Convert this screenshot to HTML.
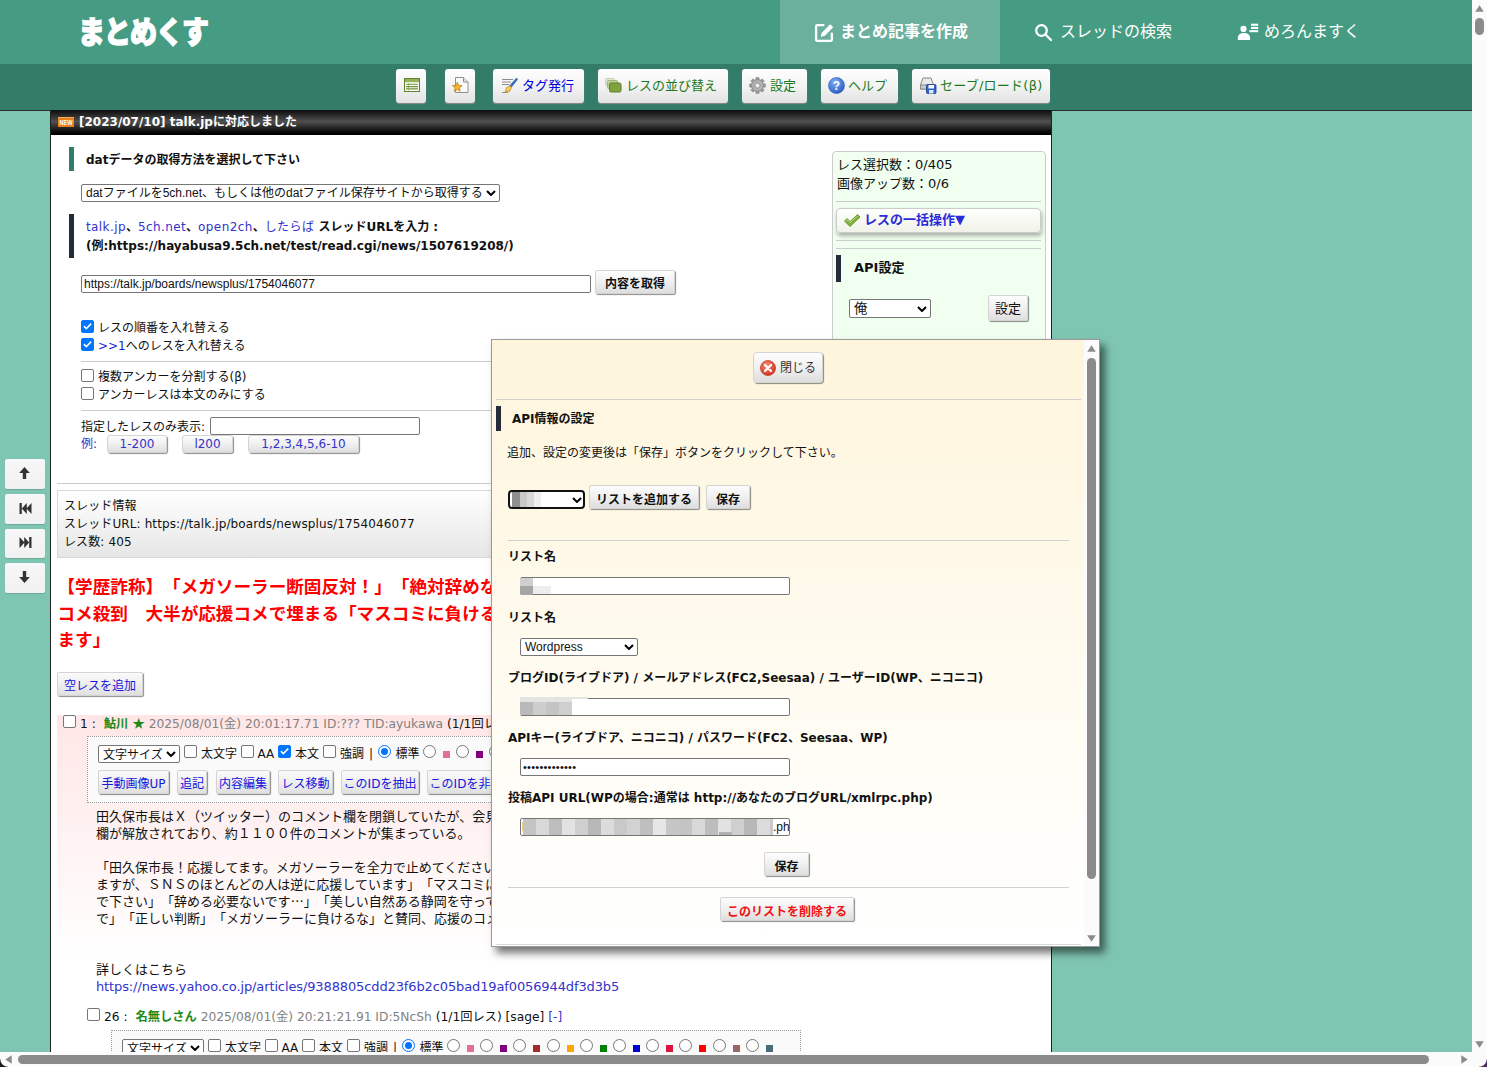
<!DOCTYPE html>
<html lang="ja">
<head>
<meta charset="utf-8">
<title>まとめくす</title>
<style>
*{box-sizing:border-box;margin:0;padding:0}
html,body{width:1487px;height:1067px;overflow:hidden}
body{position:relative;background:#7fc6b2;font-family:"DejaVu Sans","Noto Sans CJK JP",sans-serif;font-size:12px;color:#111;line-height:18px;text-spacing-trim:space-all}
.abs{position:absolute}
.t{position:absolute;white-space:nowrap}
.ar{font-family:"Liberation Sans","Noto Sans CJK JP",sans-serif}
a,.lk{color:#3333cc;text-decoration:none}
#hdr{position:absolute;left:0;top:0;width:1472px;height:64px;background:#469c83}
#tb{position:absolute;left:0;top:64px;width:1472px;height:47px;background:#337c68;border-bottom:1px solid #2a2a2a}
#main{position:absolute;left:50px;top:110px;width:1002px;height:942px;background:#fff;border-left:1px solid #222;border-right:1px solid #222;overflow:hidden}
#news{position:absolute;left:51px;top:110px;width:1000px;height:25px;background:linear-gradient(#0c0c0c 0%,#505050 47%,#2a2a2a 68%,#000 93%,#000 100%);color:#fff;font-weight:bold;font-size:12px}
.tab{position:absolute;top:0;height:64px;color:#fff;font-size:16px;line-height:64px;white-space:nowrap}
.tbtn{position:absolute;top:69px;height:34px;border-radius:3px;background:linear-gradient(#fff,#f3f3f3 50%,#e2e2e2);box-shadow:0 1px 1px #8d8d8d;font-size:13px;line-height:34px;white-space:nowrap}
.cb{position:absolute;width:13px;height:13px;border:1px solid #767676;border-radius:2px;background:#fff}
.cb.on{background:#0075ff;border-color:#0075ff}
.cb.on::after{content:"";position:absolute;left:-1px;top:-1px;width:13px;height:13px;background:#fff;clip-path:polygon(2.300px 6.800px,3.500px 5.600px,5.300px 7.400px,9.600px 3.100px,10.800px 4.300px,5.300px 9.800px)}
.rd{position:absolute;width:13px;height:13px;border:1px solid #767676;border-radius:50%;background:#fff}
.rd.on{border-color:#0075ff}
.rd.on::after{content:"";position:absolute;left:2px;top:2px;width:7px;height:7px;border-radius:50%;background:#0075ff}
.sq{position:absolute;width:7px;height:7px}
.hr{position:absolute;height:1px;background:#ccc}
.inp{position:absolute;border:1px solid #767676;border-radius:2px;background:#fff;font-family:"Liberation Sans","Noto Sans CJK JP",sans-serif;font-size:12px;white-space:nowrap;overflow:hidden}
.sel{position:absolute;border:1px solid #767676;border-radius:2px;background:#fff;font-family:"Liberation Sans","Noto Sans CJK JP",sans-serif;font-size:12px;white-space:nowrap;overflow:hidden}
.sel svg{position:absolute;right:3px;top:50%;margin-top:-3px}
.gb{position:absolute;border-radius:2px;background:linear-gradient(#fdfdfd,#f0f0f0 50%,#dedede);box-shadow:1px 1px 1px rgba(0,0,0,.45);border:1px solid #d4d4d4;white-space:nowrap;text-align:center}
.pb{color:#1414dc;border-radius:2px;background:linear-gradient(#fbfbfb,#efefef 50%,#e0e0e0)}
.sb{position:absolute;left:5px;width:40px;height:29.500px;border-radius:2px;background:linear-gradient(#f7f7f7,#f1f1f1);box-shadow:0 1px 1px rgba(0,0,0,.15)}
</style>
</head>
<body>
<!-- HEADER -->
<div id="hdr">
<div class="t" id="logo" style="left:78px;top:11px;font-family:'Noto Sans CJK JP',sans-serif;font-weight:900;font-size:27px;line-height:40px;color:#fff;letter-spacing:-1px;-webkit-text-stroke:1.2px #fff;transform:scaleY(1.12);transform-origin:0 50%">まとめくす</div>
<div class="abs" style="left:780px;top:0;width:220px;height:64px;background:#6bb09d"></div>
<svg class="abs" style="left:814px;top:22px" width="21" height="21" viewBox="0 0 20 20" fill="none" stroke="#fff" stroke-width="2.2" stroke-linejoin="round" stroke-linecap="round"><path d="M9 3H3.2A1.2 1.2 0 0 0 2 4.200V16.800A1.200 1.200 0 0 0 3.200 18H15.800A1.200 1.200 0 0 0 17 16.800V11"/><path d="M7 13.500L7.800 10.500L15.500 2.800L17.700 5L10 12.700Z" fill="#fff" stroke-width="1"/></svg>
<div class="tab" style="left:840px;font-weight:bold">まとめ記事を作成</div>
<svg class="abs" style="left:1034px;top:23px" width="20" height="20" viewBox="0 0 20 20" fill="none" stroke="#fff" stroke-width="2.300" stroke-linecap="round"><circle cx="7.500" cy="7.500" r="5.300"/><path d="M11.500 11.500L17 17"/></svg>
<div class="tab" style="left:1060px">スレッドの検索</div>
<svg class="abs" style="left:1237px;top:23px" width="22" height="18" viewBox="0 0 22 18" fill="#fff"><circle cx="6.500" cy="5.900" r="3.100"/><path d="M0.800 16.900V15C0.800 11.800 3.400 9.900 6.900 9.900S13.100 11.800 13.100 15V16.900Z"/><rect x="14" y="0.700" width="7.200" height="2.100"/><rect x="14" y="3.900" width="7.200" height="2.100"/><rect x="12.400" y="7.100" width="8.800" height="2.100"/></svg>
<div class="tab" style="left:1264px">めろんますく</div>
</div>
<div id="tb"></div>
<div class="tbtn" style="left:396px;width:30px"></div>
<svg class="abs" style="left:404px;top:78px" width="16" height="14" viewBox="0 0 16 14"><rect x="0.500" y="0.500" width="15" height="13" fill="#fdfff8" stroke="#5f7f2a"/><rect x="1" y="1" width="14" height="3.200" fill="#93b35a"/><path d="M2 6.300H14M2 8.600H14M2 10.900H14" stroke="#6f8f3a" stroke-width="1.100"/><path d="M4.500 5V12.500" stroke="#8aa85a" stroke-width="0.700"/></svg>
<div class="tbtn" style="left:445px;width:30px"></div>
<svg class="abs" style="left:452px;top:77px" width="17" height="17" viewBox="0 0 17 17"><path d="M3.500 0.500H11.500L16 5V15.500H3.500Z" fill="#fafafa" stroke="#8f8f8f"/><path d="M11.500 0.500V5H16" fill="#e2e2e2" stroke="#8f8f8f"/><path d="M5.300 5.200L6.593 8.420L10.055 8.655L7.392 10.880L8.239 14.245L5.300 12.400L2.361 14.245L3.208 10.880L0.545 8.655L4.007 8.420Z" fill="#f7b62e" stroke="#c4820f" stroke-width="0.800" stroke-linejoin="round"/></svg>
<div class="tbtn" style="left:493px;width:91px"></div>
<svg class="abs" style="left:501px;top:77px" width="17" height="17" viewBox="0 0 17 17"><path d="M1 2.500H12M1 5H10M1 7.500H8M1 15.500H7" stroke="#8c8c8c" stroke-width="1"/><path d="M15.500 1L16.500 2.500L10.500 10L8.500 9Z" fill="#3d72c4" stroke="#264f96" stroke-width="0.600"/><path d="M8.500 9L10.500 10L9 14L4 15.500L5.500 10.500Z" fill="#f5c95a" stroke="#b8862a" stroke-width="0.700"/></svg>
<div class="t" style="left:522px;top:69px;line-height:34px;font-size:13px;color:#0000dd">タグ発行</div>
<div class="tbtn" style="left:598px;width:130px"></div>
<svg class="abs" style="left:605px;top:78px" width="17" height="15" viewBox="0 0 17 15"><rect x="0.500" y="0.500" width="9" height="7" rx="1" fill="#dfe9cf" stroke="#c3d2ab"/><rect x="2.500" y="2.500" width="10" height="8" rx="1" fill="#bcd199" stroke="#9db777"/><rect x="4.500" y="5" width="11.500" height="9" rx="1.500" fill="#7fa23f" stroke="#5f7f2a"/></svg>
<div class="t" style="left:626px;top:69px;line-height:34px;font-size:13px;color:#1a7a1a">レスの並び替え</div>
<div class="tbtn" style="left:742px;width:65px"></div>
<svg class="abs" style="left:749px;top:77px" width="17" height="17" viewBox="0 0 17 17"><g transform="translate(8.500 8.500)"><g fill="#9c9c9c" stroke="#777" stroke-width="0.500"><rect x="-1.700" y="-8" width="3.400" height="16" rx="0.800"/><rect x="-1.700" y="-8" width="3.400" height="16" rx="0.800" transform="rotate(45)"/><rect x="-1.700" y="-8" width="3.400" height="16" rx="0.800" transform="rotate(90)"/><rect x="-1.700" y="-8" width="3.400" height="16" rx="0.800" transform="rotate(135)"/></g><circle r="5.800" fill="#b4b4b4" stroke="#7d7d7d" stroke-width="0.600"/><circle r="2.600" fill="#f1f1f1" stroke="#7d7d7d" stroke-width="0.800"/></g></svg>
<div class="t" style="left:770px;top:69px;line-height:34px;font-size:13px;color:#1a7a1a">設定</div>
<div class="tbtn" style="left:821px;width:77px"></div>
<svg class="abs" style="left:828px;top:77px" width="17" height="17" viewBox="0 0 17 17"><defs><radialGradient id="hg" cx="0.400" cy="0.300" r="0.800"><stop offset="0" stop-color="#7fb0f5"/><stop offset="1" stop-color="#1f55c0"/></radialGradient></defs><circle cx="8.500" cy="8.500" r="8" fill="url(#hg)" stroke="#2a55a8" stroke-width="0.600"/><text x="8.500" y="13" text-anchor="middle" font-family="Liberation Sans,sans-serif" font-weight="bold" font-size="12" fill="#fff">?</text></svg>
<div class="t" style="left:848px;top:69px;line-height:34px;font-size:13px;color:#1a7a1a">ヘルプ</div>
<div class="tbtn" style="left:912px;width:138px"></div>
<svg class="abs" style="left:920px;top:77px" width="17" height="17" viewBox="0 0 17 17"><path d="M3 1H11L13.500 8V12H0.500V8Z" fill="#e9e9e9" stroke="#8a8a8a"/><rect x="0.500" y="8" width="13" height="4" fill="#c9c9c9" stroke="#8a8a8a"/><rect x="6.500" y="7.500" width="9.500" height="9" rx="1" fill="#2b62c9" stroke="#1c3f8a" stroke-width="0.800"/><rect x="8.500" y="8" width="5.500" height="3.500" fill="#fff"/><rect x="9" y="13" width="4.500" height="3.500" fill="#dfe6f5"/></svg>
<div class="t" style="left:940px;top:69px;line-height:34px;font-size:13px;color:#1a7a1a;letter-spacing:0.250px">セーブ/ロード(β)</div>
<div id="main"></div>
<div id="news"></div>
<svg class="abs" style="left:58px;top:117px" width="16" height="10" viewBox="0 0 16 10"><rect width="16" height="10" fill="#e8801f"/><rect y="0" width="16" height="1" fill="#f5a85a"/><text x="8" y="8" text-anchor="middle" font-family="Liberation Sans,sans-serif" font-weight="bold" font-size="7" fill="#fff" textLength="13" lengthAdjust="spacingAndGlyphs">NEW</text></svg>
<div class="t" style="left:79px;top:112px;line-height:20px;color:#fff;font-weight:bold;font-size:12px">[2023/07/10] talk.jpに対応しました</div>
<!-- LEFT PANEL -->
<div class="abs" style="left:69px;top:147px;width:5px;height:24px;background:#2f7d6b"></div>
<div class="t" style="left:86px;top:151px;font-weight:bold">datデータの取得方法を選択して下さい</div>
<div class="sel" style="left:81px;top:184px;width:419px;height:18px;line-height:16px;padding-left:4px">datファイルを5ch.net、もしくは他のdatファイル保存サイトから取得する<svg width="10" height="6" viewBox="0 0 10 6"><path d="M1 1L5 5L9 1" fill="none" stroke="#000" stroke-width="2"/></svg></div>
<div class="abs" style="left:69px;top:214px;width:5px;height:44px;background:#252b3a"></div>
<div class="t" style="left:86px;top:218px;line-height:18.500px;font-weight:bold"><span class="lk" style="font-weight:normal;letter-spacing:0.400px">talk.jp</span>、<span class="lk" style="font-weight:normal;letter-spacing:0.400px">5ch.net</span>、<span class="lk" style="font-weight:normal;letter-spacing:0.400px">open2ch</span>、<span class="lk" style="font-weight:normal;letter-spacing:0.400px">したらば</span> スレッドURLを入力 :<br>(例:https://hayabusa9.5ch.net/test/read.cgi/news/1507619208/)</div>
<div class="inp" style="left:81px;top:275px;width:510px;height:18px;line-height:16px;padding-left:2px">https://talk.jp/boards/newsplus/1754046077</div>
<div class="gb" style="left:595px;top:270px;width:80px;height:24px;line-height:26px;font-weight:bold">内容を取得</div>
<div class="cb on" style="left:81px;top:320px"></div><div class="t" style="left:98px;top:319px">レスの順番を入れ替える</div>
<div class="cb on" style="left:81px;top:338px"></div><div class="t" style="left:98px;top:337px"><span style="color:#2222dd">&gt;&gt;1</span>へのレスを入れ替える</div>
<div class="hr" style="left:81px;top:361px;width:740px"></div>
<div class="cb" style="left:81px;top:369px"></div><div class="t" style="left:98px;top:368px">複数アンカーを分割する(β)</div>
<div class="cb" style="left:81px;top:387px"></div><div class="t" style="left:98px;top:386px">アンカーレスは本文のみにする</div>
<div class="hr" style="left:81px;top:410px;width:740px"></div>
<div class="t" style="left:81px;top:418px">指定したレスのみ表示:</div>
<div class="inp" style="left:210px;top:417px;width:210px;height:18px"></div>
<div class="t lk" style="left:81px;top:435px">例:</div>
<div class="gb lk" style="left:107px;top:434.500px;width:60px;height:18.500px;line-height:17px;border-radius:3px">1-200</div>
<div class="gb lk" style="left:182px;top:434.500px;width:51px;height:18.500px;line-height:17px;border-radius:3px">l200</div>
<div class="gb lk" style="left:248px;top:434.500px;width:111px;height:18.500px;line-height:17px;border-radius:3px">1,2,3,4,5,6-10</div>
<div class="hr" style="left:57px;top:483px;width:988px"></div>
<div class="abs" style="left:57px;top:490px;width:988px;height:68px;border:1px solid #d8d8d8;background:linear-gradient(#fff,#e6e6e6)"></div>
<div class="t" style="left:64px;top:497px;font-size:12px;letter-spacing:0.110px">スレッド情報<br>スレッドURL: https://talk.jp/boards/newsplus/1754046077<br>レス数: 405</div>
<div class="t" style="left:57.500px;top:574.400px;font-size:17.600px;line-height:26.400px;font-weight:bold;color:#f00">【学歴詐称】「メガソーラー断固反対！」「絶対辞めないで」田久保市長のＸコメント欄解放で応援<br>コメ殺到　大半が応援コメで埋まる「マスコミに負けるな」「辞める必要ない」「応援して<br>ます」</div>
<div class="gb pb" style="left:57px;top:672px;width:86px;height:24px;line-height:26px">空レスを追加</div>
<!-- RIGHT PANEL -->
<div class="abs" style="left:831.500px;top:151px;width:214.500px;height:400px;background:#f0fff0;border:1px solid #ccc;border-radius:4px"></div>
<div class="t" style="left:837px;top:155px;font-size:13px;line-height:19px">レス選択数：0/405<br>画像アップ数：0/6</div>
<div class="hr" style="left:836px;top:201px;width:205px"></div>
<div class="abs" style="left:836px;top:208px;width:205px;height:25px;border:1px solid #ccc;border-radius:4px;background:linear-gradient(#fdfffb,#f1f3ea);box-shadow:1px 3px 4px rgba(0,0,0,.3)"></div>
<svg class="abs" style="left:843px;top:213px" width="18" height="15" viewBox="0 0 18 15"><path d="M1.500 8L4 5.500L7 8.500L14.500 1.500L17 4L7 13.500Z" fill="#7fb23a" stroke="#5c8a22" stroke-width="0.800" stroke-linejoin="round"/><path d="M2.600 8L4 6.600L7 9.600L14.500 2.800" fill="none" stroke="#b7db7d" stroke-width="0.900"/></svg>
<div class="t" style="left:864px;top:211px;font-size:13px;font-weight:bold;color:#2b2bd9">レスの一括操作▼</div>
<div class="hr" style="left:836px;top:240px;width:205px"></div>
<div class="hr" style="left:836px;top:248px;width:205px"></div>
<div class="abs" style="left:836px;top:255px;width:5px;height:27px;background:#252b3a"></div>
<div class="t" style="left:854px;top:259px;font-size:13px;font-weight:bold">API設定</div>
<div class="sel" style="left:849px;top:299px;width:82px;height:19px;line-height:17px;padding-left:4px;font-size:13.300px">俺<svg width="10" height="6" viewBox="0 0 10 6"><path d="M1 1L5 5L9 1" fill="none" stroke="#000" stroke-width="2"/></svg></div>
<div class="gb" style="left:988px;top:295px;width:40px;height:26px;line-height:25px;font-size:13px">設定</div>
<!-- POSTS -->
<div class="abs" style="left:57px;top:715px;width:988px;height:290px;background:linear-gradient(#ffe6e6,#fff 85%)"></div>
<div class="cb" style="left:63px;top:715px"></div>
<div class="t" style="left:80px;top:715px;font-size:12.250px">1 : <b style="color:#1a8a1a;margin-left:4px">鮎川 <span style="font-family:'Noto Sans CJK JP',sans-serif;line-height:0">★</span></b> <span style="color:#828282">2025/08/01(金) 20:01:17.71 ID:??? TID:ayukawa</span> (1/1回レス) <span class="lk">[-]</span></div>
<div class="abs" style="left:87px;top:736px;width:714px;height:67px;border:1px dotted #999;background:#fafafa"></div>
<div class="sel" style="left:98px;top:745px;width:82px;height:18px;line-height:19px;padding-left:4px;font-size:12px">文字サイズ<svg width="10" height="6" viewBox="0 0 10 6"><path d="M1 1L5 5L9 1" fill="none" stroke="#000" stroke-width="2"/></svg></div>
<div class="cb" style="left:184px;top:745px"></div><div class="t" style="left:201px;top:745px">太文字</div>
<div class="cb" style="left:241px;top:745px"></div><div class="t" style="left:257.5px;top:745px">AA</div>
<div class="cb on" style="left:278px;top:745px"></div><div class="t" style="left:295px;top:745px">本文</div>
<div class="cb" style="left:323px;top:745px"></div><div class="t" style="left:340px;top:745px">強調</div>
<div class="t" style="left:369px;top:745px">|</div>
<div class="rd on" style="left:378px;top:745px"></div><div class="t" style="left:395.5px;top:745px">標準</div>
<div class="rd" style="left:423.0px;top:745px"></div><div class="sq" style="left:443.0px;top:750.5px;background:#e07095"></div>
<div class="rd" style="left:456.2px;top:745px"></div><div class="sq" style="left:476.2px;top:750.5px;background:#800080"></div>
<div class="rd" style="left:489.4px;top:745px"></div><div class="sq" style="left:509.4px;top:750.5px;background:#a52a2a"></div>
<div class="rd" style="left:522.6px;top:745px"></div><div class="sq" style="left:542.6px;top:750.5px;background:#ffa500"></div>
<div class="rd" style="left:555.8px;top:745px"></div><div class="sq" style="left:575.8px;top:750.5px;background:#008000"></div>
<div class="rd" style="left:589.0px;top:745px"></div><div class="sq" style="left:609.0px;top:750.5px;background:#0000cd"></div>
<div class="rd" style="left:622.2px;top:745px"></div><div class="sq" style="left:642.2px;top:750.5px;background:#dc143c"></div>
<div class="rd" style="left:655.4px;top:745px"></div><div class="sq" style="left:675.4px;top:750.5px;background:#ff0000"></div>
<div class="rd" style="left:688.6px;top:745px"></div><div class="sq" style="left:708.6px;top:750.5px;background:#996666"></div>
<div class="rd" style="left:721.8px;top:745px"></div><div class="sq" style="left:741.8px;top:750.5px;background:#4a6a7a"></div>
<div class="gb pb" style="left:98px;top:770px;width:71px;height:24px;line-height:27.500px">手動画像UP</div>
<div class="gb pb" style="left:177px;top:770px;width:30px;height:24px;line-height:27.500px">追記</div>
<div class="gb pb" style="left:216px;top:770px;width:54px;height:24px;line-height:27.500px">内容編集</div>
<div class="gb pb" style="left:278px;top:770px;width:55px;height:24px;line-height:27.500px">レス移動</div>
<div class="gb pb" style="left:341px;top:770px;width:78px;height:24px;line-height:27.500px">このIDを抽出</div>
<div class="gb pb" style="left:427px;top:770px;width:90px;height:24px;line-height:27.500px">このIDを非表示</div>
<div class="t" style="left:96px;top:808px;font-size:13px;line-height:17px">田久保市長はＸ（ツイッター）のコメント欄を閉鎖していたが、会見後に解放。最新の投稿のコメント<br>欄が解放されており、約１１００件のコメントが集まっている。<br><br>「田久保市長！応援してます。メガソーラーを全力で止めてください」「テレビでは批判されてい<br>ますが、ＳＮＳのほとんどの人は逆に応援しています」「マスコミに負けないで」「絶対辞めない<br>で下さい」「辞める必要ないです<span style="font-family:'Noto Sans CJK JP',sans-serif;line-height:0">…</span>」「美しい自然ある静岡を守ってください」「負けない<br>で」「正しい判断」「メガソーラーに負けるな」と賛同、応援のコメントが大半を占めている。<br><br><br>詳しくはこちら<br><span class="lk" style="letter-spacing:-0.120px">https://news.yahoo.co.jp/articles/9388805cdd23f6b2c05bad19af0056944df3d3b5</span></div>
<div class="cb" style="left:87px;top:1008px"></div>
<div class="t" style="left:104px;top:1008px;font-size:12.250px">26 : <b style="color:#1a8a1a;margin-left:4px">名無しさん</b> <span style="color:#828282">2025/08/01(金) 20:21:21.91 ID:5NcSh</span> (1/1回レス) [sage] <span class="lk">[-]</span></div>
<div class="abs" style="left:111px;top:1030px;width:690px;height:67px;border:1px dotted #999;background:#fafafa"></div>
<div class="sel" style="left:122px;top:1039px;width:82px;height:18px;line-height:19px;padding-left:4px;font-size:12px">文字サイズ<svg width="10" height="6" viewBox="0 0 10 6"><path d="M1 1L5 5L9 1" fill="none" stroke="#000" stroke-width="2"/></svg></div>
<div class="cb" style="left:208px;top:1039px"></div><div class="t" style="left:225px;top:1039px">太文字</div>
<div class="cb" style="left:265px;top:1039px"></div><div class="t" style="left:281.5px;top:1039px">AA</div>
<div class="cb" style="left:302px;top:1039px"></div><div class="t" style="left:319px;top:1039px">本文</div>
<div class="cb" style="left:347px;top:1039px"></div><div class="t" style="left:364px;top:1039px">強調</div>
<div class="t" style="left:393px;top:1039px">|</div>
<div class="rd on" style="left:402px;top:1039px"></div><div class="t" style="left:419.5px;top:1039px">標準</div>
<div class="rd" style="left:447.0px;top:1039px"></div><div class="sq" style="left:467.0px;top:1044.5px;background:#e07095"></div>
<div class="rd" style="left:480.2px;top:1039px"></div><div class="sq" style="left:500.2px;top:1044.5px;background:#800080"></div>
<div class="rd" style="left:513.4px;top:1039px"></div><div class="sq" style="left:533.4px;top:1044.5px;background:#a52a2a"></div>
<div class="rd" style="left:546.6px;top:1039px"></div><div class="sq" style="left:566.6px;top:1044.5px;background:#ffa500"></div>
<div class="rd" style="left:579.8px;top:1039px"></div><div class="sq" style="left:599.8px;top:1044.5px;background:#008000"></div>
<div class="rd" style="left:613.0px;top:1039px"></div><div class="sq" style="left:633.0px;top:1044.5px;background:#0000cd"></div>
<div class="rd" style="left:646.2px;top:1039px"></div><div class="sq" style="left:666.2px;top:1044.5px;background:#dc143c"></div>
<div class="rd" style="left:679.4px;top:1039px"></div><div class="sq" style="left:699.4px;top:1044.5px;background:#ff0000"></div>
<div class="rd" style="left:712.6px;top:1039px"></div><div class="sq" style="left:732.6px;top:1044.5px;background:#996666"></div>
<div class="rd" style="left:745.8px;top:1039px"></div><div class="sq" style="left:765.8px;top:1044.5px;background:#4a6a7a"></div>
<!-- side buttons -->
<div class="sb" style="top:459px"></div>
<svg class="abs" style="left:19px;top:467px" width="11" height="12" viewBox="0 0 11 12"><path d="M5.500 0L10.800 6H7.200V12H3.800V6H0.200Z" fill="#333"/></svg>
<div class="sb" style="top:494px"></div>
<svg class="abs" style="left:18.500px;top:503px" width="13" height="11" viewBox="0 0 13 11"><path d="M0.500 0H2.800V11H0.500ZM2.800 5.500L7.800 0V11ZM7.500 5.500L12.500 0V11Z" fill="#333"/></svg>
<div class="sb" style="top:528.500px"></div>
<svg class="abs" style="left:18.500px;top:537px" width="13" height="11" viewBox="0 0 13 11"><path d="M12.500 0H10.200V11H12.500ZM10.200 5.500L5.200 0V11ZM5.500 5.500L0.500 0V11Z" fill="#333"/></svg>
<div class="sb" style="top:563px"></div>
<svg class="abs" style="left:19px;top:571px" width="11" height="12" viewBox="0 0 11 12"><path d="M5.500 12L10.800 6H7.200V0H3.800V6H0.200Z" fill="#333"/></svg>

<!-- MODAL -->
<div class="abs" style="left:491px;top:339px;width:609px;height:608px;border:1px solid #9a9a9a;background:linear-gradient(#fef5dc,#fef8e6 30%,#fffbf0 55%,#fffefa 82%,#fff);box-shadow:5px 6px 8px rgba(0,0,0,.55)"></div>
<div class="abs" style="left:1084px;top:340px;width:15px;height:606px;background:#fbfbfb"></div>
<svg class="abs" style="left:1087px;top:345px" width="9" height="7" viewBox="0 0 9 7"><path d="M4.500 0.300L8.800 6.700H0.200Z" fill="#8b8b8b"/></svg>
<div class="abs" style="left:1087px;top:358px;width:9px;height:521px;border-radius:4.500px;background:#8b8b8b"></div>
<svg class="abs" style="left:1087px;top:935px" width="9" height="7" viewBox="0 0 9 7"><path d="M4.500 6.700L8.800 0.300H0.200Z" fill="#8b8b8b"/></svg>
<div class="gb" style="left:753px;top:352px;width:70px;height:31px;border-radius:4px"></div>
<svg class="abs" style="left:759.500px;top:359.500px" width="16" height="16" viewBox="0 0 17 17"><defs><radialGradient id="cg" cx="0.400" cy="0.300" r="0.800"><stop offset="0" stop-color="#f58a72"/><stop offset="1" stop-color="#d2281c"/></radialGradient></defs><circle cx="8.500" cy="8.500" r="8" fill="url(#cg)" stroke="#b5281c" stroke-width="0.700"/><path d="M5.300 5.300L11.700 11.700M11.700 5.300L5.300 11.700" stroke="#fff" stroke-width="2.400" stroke-linecap="round"/></svg>
<div class="t" style="left:780px;top:359px;color:#333">閉じる</div>
<div class="hr" style="left:496px;top:399px;width:585px;background:#d0d0d0"></div>
<div class="abs" style="left:496px;top:406px;width:5px;height:25px;background:#252b3a"></div>
<div class="t" style="left:512px;top:410px;font-weight:bold">API情報の設定</div>
<div class="t" style="left:507px;top:444px">追加、設定の変更後は「保存」ボタンをクリックして下さい。</div>
<div class="abs" style="left:508px;top:490px;width:77px;height:19px;border:2px solid #111;border-radius:4px;background:#fff"></div>
<div class="abs" style="left:512px;top:492px;width:29px;height:15px;overflow:hidden"><i class="abs" style="left:0px;top:0px;width:8px;height:15px;background:#8f8f8f"></i><i class="abs" style="left:8px;top:0px;width:7px;height:15px;background:#c9c9c9"></i><i class="abs" style="left:15px;top:0px;width:7px;height:15px;background:#d9d9d9"></i><i class="abs" style="left:22px;top:0px;width:7px;height:15px;background:#efefef"></i></div>
<svg class="abs" style="left:571.500px;top:496.500px" width="10" height="6" viewBox="0 0 10 6"><path d="M1 1L5 5L9 1" fill="none" stroke="#000" stroke-width="2"/></svg>
<div class="gb" style="left:589px;top:485px;width:110px;height:24px;line-height:28.500px;font-weight:bold">リストを追加する</div>
<div class="gb" style="left:706px;top:485px;width:44px;height:24px;line-height:28.500px;font-weight:bold">保存</div>
<div class="hr" style="left:508px;top:540px;width:561px;background:#d0d0d0"></div>
<div class="t" style="left:508px;top:548px;font-weight:bold">リスト名</div>
<div class="inp" style="left:520px;top:577px;width:270px;height:18px"></div>
<div class="abs" style="left:520px;top:577px;width:31px;height:18px;overflow:hidden;border-radius:2px 0 0 2px"><i class="abs" style="left:0;top:1px;width:13px;height:8px;background:#cfcfcf"></i><i class="abs" style="left:0;top:9px;width:13px;height:9px;background:#a6a6a6"></i><i class="abs" style="left:13px;top:9px;width:18px;height:8px;background:#ededed"></i></div>
<div class="t" style="left:508px;top:609px;font-weight:bold">リスト名</div>
<div class="sel" style="left:520px;top:638px;width:118px;height:18px;line-height:16px;padding-left:4px">Wordpress<svg width="10" height="6" viewBox="0 0 10 6"><path d="M1 1L5 5L9 1" fill="none" stroke="#000" stroke-width="2"/></svg></div>
<div class="t" style="left:508px;top:669px;font-weight:bold">ブログID(ライブドア) / メールアドレス(FC2,Seesaa) / ユーザーID(WP、ニコニコ)</div>
<div class="inp" style="left:520px;top:698px;width:270px;height:18px"></div>
<div class="abs" style="left:520px;top:697px;width:68px;height:18px;overflow:hidden"><i class="abs" style="left:0px;top:0px;width:68px;height:5px;background:#e4e4e4"></i><i class="abs" style="left:0px;top:5px;width:13px;height:13px;background:#b9b9b9"></i><i class="abs" style="left:13px;top:5px;width:13px;height:13px;background:#cdcdcd"></i><i class="abs" style="left:26px;top:5px;width:13px;height:13px;background:#c4c4c4"></i><i class="abs" style="left:39px;top:5px;width:13px;height:13px;background:#cfcfcf"></i><i class="abs" style="left:52px;top:5px;width:16px;height:13px;background:#fff"></i><i class="abs" style="left:52px;top:0px;width:16px;height:2px;background:#e4e4e4"></i><i class="abs" style="left:52px;top:2px;width:16px;height:16px;background:#fff"></i></div>
<div class="t" style="left:508px;top:729px;font-weight:bold">APIキー(ライブドア、ニコニコ) / パスワード(FC2、Seesaa、WP)</div>
<div class="inp" style="left:520px;top:758px;width:270px;height:18px;line-height:16px;padding-left:2px;font-size:11px;letter-spacing:0.250px">•••••••••••••</div>
<div class="t" style="left:508px;top:789px;font-weight:bold">投稿API URL(WPの場合:通常は http://あなたのブログURL/xmlrpc.php)</div>
<div class="inp" style="left:520px;top:818px;width:270px;height:18px;line-height:16px"><span style="position:absolute;left:1px">h</span><span style="position:absolute;left:252px">.ph</span></div>
<div class="abs" style="left:523px;top:819px;width:250px;height:16px;overflow:hidden"><i class="abs" style="left:0px;top:0px;width:13px;height:16px;background:#c4c4c4"></i><i class="abs" style="left:13px;top:0px;width:13px;height:16px;background:#d8d8d8"></i><i class="abs" style="left:26px;top:0px;width:13px;height:16px;background:#bdbdbd"></i><i class="abs" style="left:39px;top:0px;width:13px;height:16px;background:#e2e2e2"></i><i class="abs" style="left:52px;top:0px;width:13px;height:16px;background:#cfcfcf"></i><i class="abs" style="left:65px;top:0px;width:13px;height:16px;background:#b8b8b8"></i><i class="abs" style="left:78px;top:0px;width:13px;height:16px;background:#dcdcdc"></i><i class="abs" style="left:91px;top:0px;width:13px;height:16px;background:#c9c9c9"></i><i class="abs" style="left:104px;top:0px;width:13px;height:16px;background:#d2d2d2"></i><i class="abs" style="left:117px;top:0px;width:13px;height:16px;background:#bfbfbf"></i><i class="abs" style="left:130px;top:0px;width:13px;height:16px;background:#e6e6e6"></i><i class="abs" style="left:143px;top:0px;width:13px;height:16px;background:#c6c6c6"></i><i class="abs" style="left:156px;top:0px;width:13px;height:16px;background:#c4c4c4"></i><i class="abs" style="left:169px;top:0px;width:13px;height:16px;background:#d8d8d8"></i><i class="abs" style="left:182px;top:0px;width:13px;height:16px;background:#bdbdbd"></i><i class="abs" style="left:195px;top:0px;width:13px;height:16px;background:#e2e2e2"></i><i class="abs" style="left:208px;top:0px;width:13px;height:16px;background:#cfcfcf"></i><i class="abs" style="left:221px;top:0px;width:13px;height:16px;background:#b8b8b8"></i><i class="abs" style="left:234px;top:0px;width:13px;height:16px;background:#dcdcdc"></i><i class="abs" style="left:247px;top:0px;width:13px;height:16px;background:#c9c9c9"></i><i class="abs" style="left:196px;top:13px;width:13px;height:3px;background:#b0b0b0"></i></div>
<div class="gb" style="left:764px;top:852px;width:45px;height:24px;line-height:28.500px;font-weight:bold">保存</div>
<div class="hr" style="left:508px;top:887px;width:561px;background:#d0d0d0"></div>
<div class="gb" style="left:720px;top:897px;width:134px;height:24px;line-height:28.500px;font-weight:bold;color:#f01212">このリストを削除する</div>
<div class="hr" style="left:496px;top:944px;width:585px;background:#d8d8d8"></div>
<!-- SCROLLBARS -->
<div class="abs" style="left:1472px;top:0;width:15px;height:1067px;background:#fbfbfb"></div>
<svg class="abs" style="left:1475px;top:5px" width="9" height="7" viewBox="0 0 9 7"><path d="M4.500 0.300L8.800 6.700H0.200Z" fill="#8b8b8b"/></svg>
<div class="abs" style="left:1475px;top:18px;width:9px;height:17px;border-radius:4.500px;background:#8b8b8b"></div>
<svg class="abs" style="left:1475px;top:1041px" width="9" height="7" viewBox="0 0 9 7"><path d="M4.500 6.700L8.800 0.300H0.200Z" fill="#8b8b8b"/></svg>
<div class="abs" style="left:0;top:1052px;width:1487px;height:15px;background:#fbfbfb"></div>
<svg class="abs" style="left:5px;top:1055px" width="7" height="9" viewBox="0 0 7 9"><path d="M0.300 4.500L6.700 0.200V8.800Z" fill="#8b8b8b"/></svg>
<div class="abs" style="left:18px;top:1055px;width:1411px;height:9px;border-radius:4.500px;background:#8b8b8b"></div>
<svg class="abs" style="left:1460.500px;top:1055px" width="7" height="9" viewBox="0 0 7 9"><path d="M6.700 4.500L0.300 0.200V8.800Z" fill="#8b8b8b"/></svg>
<div class="abs" style="left:0;top:1059px;width:8px;height:8px;background:radial-gradient(circle at 100% 0,rgba(0,0,0,0) 7.200px,#1c1c1c 8.200px)"></div>
<div class="abs" style="left:1479px;top:1059px;width:8px;height:8px;background:radial-gradient(circle at 0 0,rgba(0,0,0,0) 7.200px,#4a2a5a 8.200px)"></div>
</body>
</html>
